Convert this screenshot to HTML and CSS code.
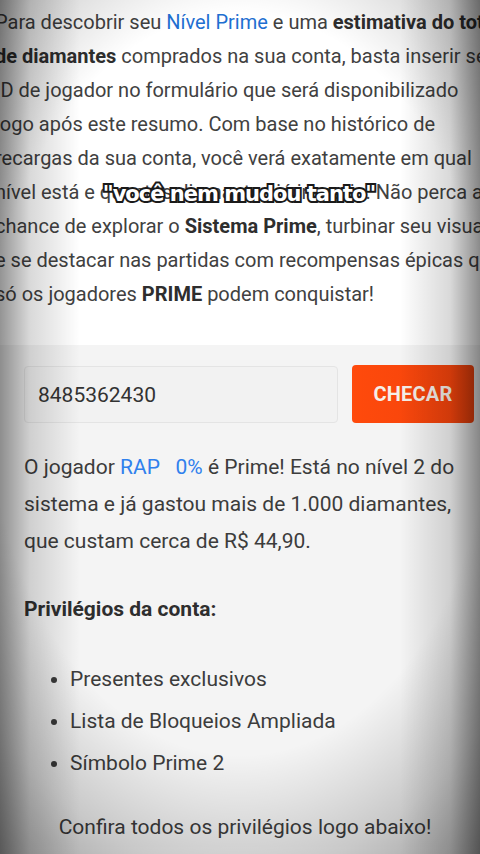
FILE: index.html
```html
<!DOCTYPE html>
<html lang="pt-BR">
<head>
<meta charset="utf-8">
<title>Nível Prime</title>
<link rel="stylesheet" href="styles.css">
</head>
<body>
<main class="page">
  <section class="intro">
    <p>Para descobrir seu <span class="link">Nível Prime</span> e uma <strong>estimativa do total</strong><br><strong>de diamantes</strong> comprados na sua conta, basta inserir seu<br>ID de jogador no formulário que será disponibilizado<br>logo após este resumo. Com base no histórico de<br>recargas da sua conta, você verá exatamente em qual<br>nível está e quantos diamantes já investiu. Não perca a<br>chance de explorar o <strong>Sistema Prime</strong>, turbinar seu visual<br>e se destacar nas partidas com recompensas épicas que<br>só os jogadores <strong>PRIME</strong> podem conquistar!</p>
  </section>
  <section class="checker">
    <form class="form-row">
      <div class="input">8485362430</div>
      <button type="button" class="btn">CHECAR</button>
    </form>
    <p class="result">O jogador <span class="name">RAP&nbsp;&nbsp;&nbsp;0%</span> é Prime! Está no nível 2 do<br>sistema e já gastou mais de 1.000 diamantes,<br>que custam cerca de R$ 44,90.</p>
    <h3 class="priv-title">Privilégios da conta:</h3>
    <ul class="priv-list">
      <li>Presentes exclusivos</li>
      <li>Lista de Bloqueios Ampliada</li>
      <li>Símbolo Prime 2</li>
    </ul>
    <p class="more">Confira todos os privilégios logo abaixo!</p>
  </section>
  <div class="caption">"você nem mudou tanto"</div>
  <div class="vignette"></div>
</main>
</body>
</html>
```
FILE: styles.css
```css
html, body {
  margin: 0;
  padding: 0;
  height: 100%;
}
body {
  overflow: hidden;
  background: #f5f5f5;
  font-family: Roboto, "Noto Sans", Arial, sans-serif;
  color: #3c3c3c;
}
.page {
  position: relative;
  height: 854px;
  overflow: hidden;
}
.intro {
  background: #ffffff;
  padding: 5px 0 34px;
}
.intro p {
  margin: 0 0 0 -5px;
  width: 560px;
  white-space: nowrap;
  font-size: 20px;
  line-height: 34px;
  color: #414141;
}
.intro strong { font-weight: 700; color: #2e2e2e; }
.link { color: #1f6fd1; }
.checker {
  background: #f4f4f4;
  padding: 21px 6px 0 24px;
}
.form-row {
  display: flex;
  gap: 14px;
  margin: 0;
}
.input {
  width: 314px;
  height: 57px;
  box-sizing: border-box;
  background: #f2f2f2;
  border: 1px solid #e4e4e4;
  border-radius: 4px;
  padding: 0 13px;
  display: flex;
  align-items: center;
  font-size: 21px;
  color: #333;
}
.btn {
  width: 122px;
  height: 58px;
  margin-top: -1px;
  border: none;
  border-radius: 4px;
  background: linear-gradient(90deg, #ff4a0c, #f1420c);
  color: #f5efe9;
  font-family: Roboto, Arial, sans-serif;
  font-weight: 700;
  font-size: 20px;
  letter-spacing: 0.2px;
}
.result {
  margin: 26px 0 0;
  font-size: 21px;
  line-height: 37px;
  white-space: nowrap;
}
.name { color: #2f80ed; }
.priv-title {
  margin: 34px 0 0;
  font-size: 21px;
  font-weight: 700;
  line-height: 30px;
  color: #2e2e2e;
}
.priv-list {
  margin: 34px 0 0;
  padding-left: 46px;
  font-size: 21px;
  line-height: 42px;
}
.more {
  margin: 23px 0 0;
  text-align: center;
  font-size: 21px;
  line-height: 40px;
  padding-right: 8px;
  white-space: nowrap;
}
.caption {
  position: absolute;
  left: 0;
  right: 0;
  top: 182px;
  text-align: center;
  padding-right: 2px;
  font-family: "DejaVu Sans", Roboto, sans-serif;
  font-weight: 700;
  font-size: 21px;
  letter-spacing: -1px;
  color: #ffffff;
  -webkit-text-stroke: 4px #1a1a1a;
  paint-order: stroke fill;
}
.vignette {
  position: absolute;
  inset: 0;
  pointer-events: none;
  background:
    linear-gradient(90deg, rgba(0,0,0,0.42) 0px, rgba(0,0,0,0.15) 30px, rgba(0,0,0,0) 80px, rgba(0,0,0,0) 400px, rgba(0,0,0,0.15) 450px, rgba(0,0,0,0.45) 480px),
    radial-gradient(ellipse 85% 70% at 50% 45%, rgba(0,0,0,0) 62%, rgba(0,0,0,0.18) 82%, rgba(0,0,0,0.4) 100%);
}
```
